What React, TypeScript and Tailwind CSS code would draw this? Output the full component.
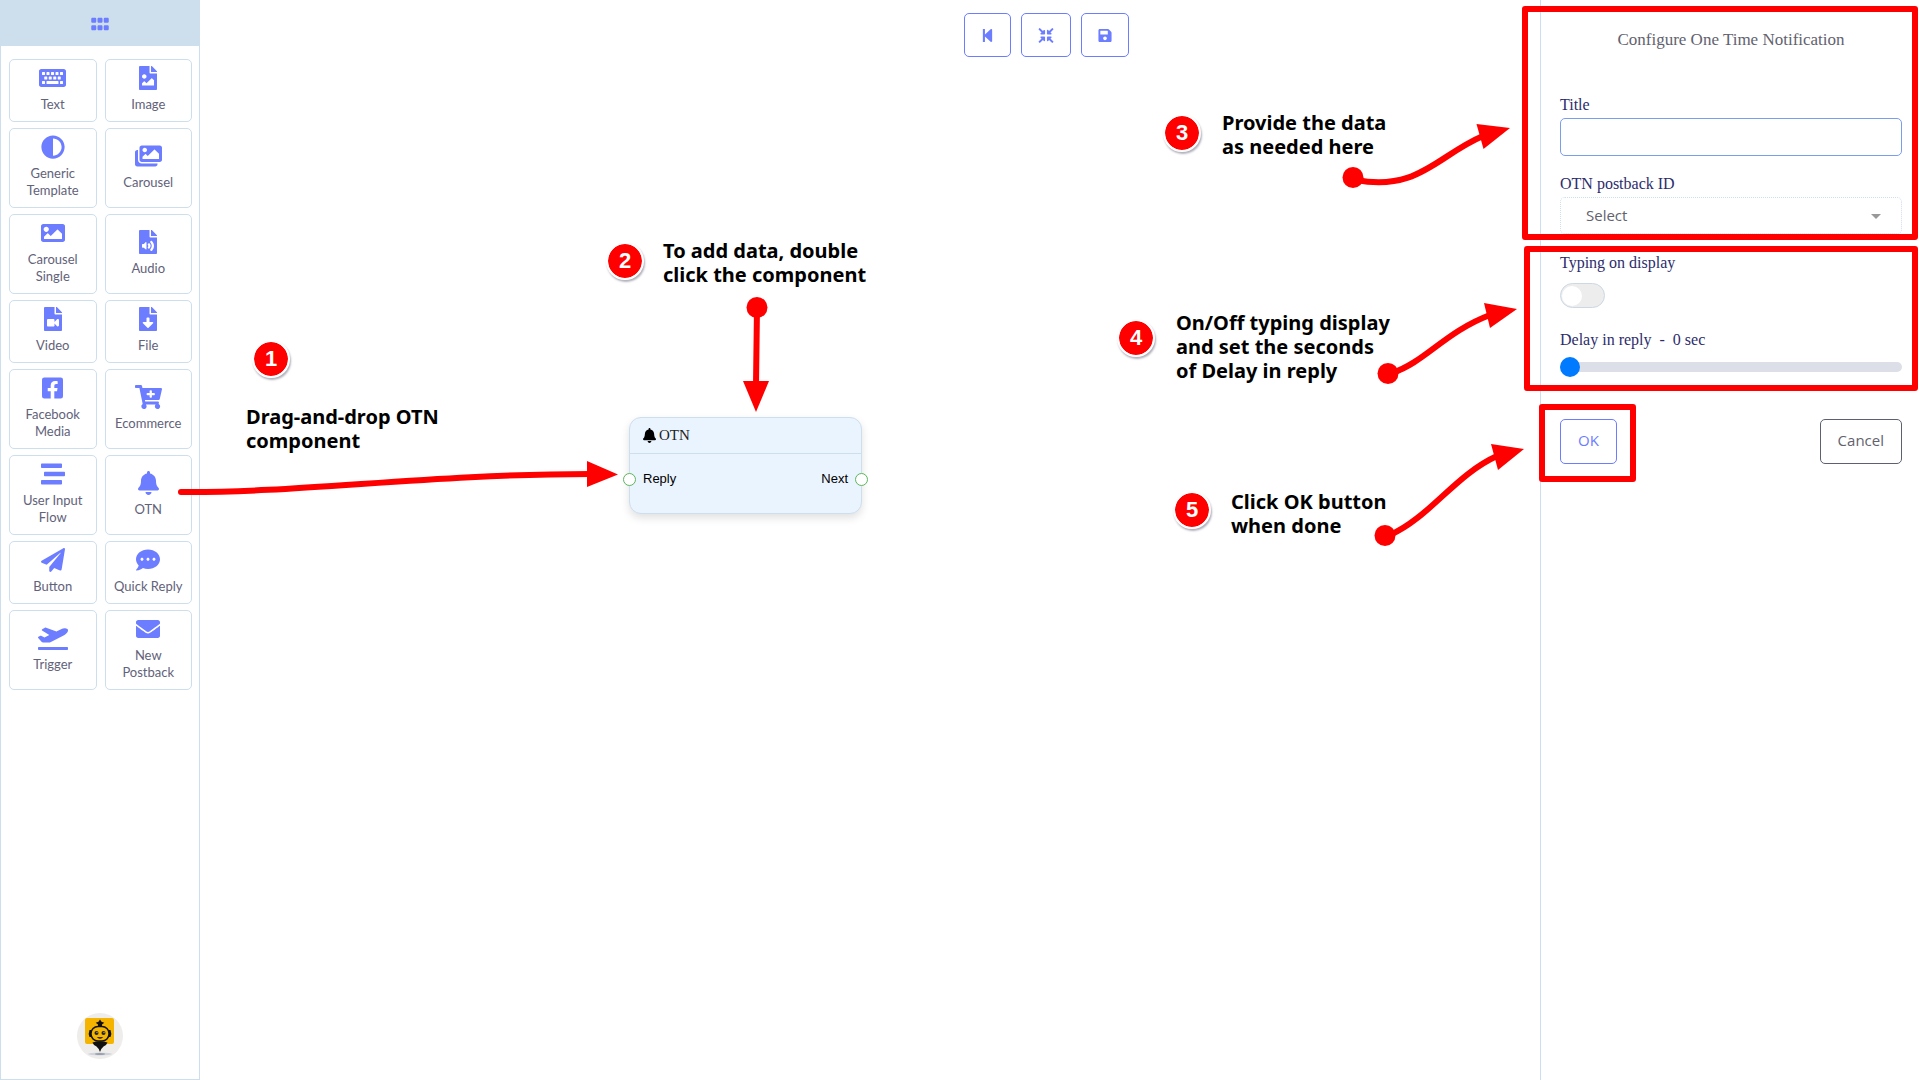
import React, { useState } from 'react';
import type { IconType } from 'react-icons';
import {
    FaAdjust,
    FaBell,
    FaCartPlus,
    FaCommentDots,
    FaCompressArrowsAlt,
    FaEnvelope,
    FaFacebookSquare,
    FaFileAudio,
    FaFileDownload,
    FaFileImage,
    FaFileVideo,
    FaGripHorizontal,
    FaImage,
    FaImages,
    FaKeyboard,
    FaPaperPlane,
    FaPlaneDeparture,
    FaSave,
    FaStepBackward,
    FaStream,
} from 'react-icons/fa';

const components: { label: string, icon: IconType, width: string }[] = [
    { label: 'Text', icon: FaKeyboard, width: 'w-[27px]' },
    { label: 'Image', icon: FaFileImage, width: 'w-[18px]' },
    { label: 'Generic Template', icon: FaAdjust, width: 'w-6' },
    { label: 'Carousel', icon: FaImages, width: 'w-[27px]' },
    { label: 'Carousel Single', icon: FaImage, width: 'w-6' },
    { label: 'Audio', icon: FaFileAudio, width: 'w-[18px]' },
    { label: 'Video', icon: FaFileVideo, width: 'w-[18px]' },
    { label: 'File', icon: FaFileDownload, width: 'w-[18px]' },
    { label: 'Facebook Media', icon: FaFacebookSquare, width: 'w-[21px]' },
    { label: 'Ecommerce', icon: FaCartPlus, width: 'w-[27px]' },
    { label: 'User Input Flow', icon: FaStream, width: 'w-6' },
    { label: 'OTN', icon: FaBell, width: 'w-[21px]' },
    { label: 'Button', icon: FaPaperPlane, width: 'w-6' },
    { label: 'Quick Reply', icon: FaCommentDots, width: 'w-6' },
    { label: 'Trigger', icon: FaPlaneDeparture, width: 'w-[30px]' },
    { label: 'New Postback', icon: FaEnvelope, width: 'w-6' },
];

const tools: { label: string, icon: IconType, width: string }[] = [
    { label: 'Back', icon: FaStepBackward, width: 'w-[13px]' },
    { label: 'Fit to screen', icon: FaCompressArrowsAlt, width: 'w-4' },
    { label: 'Save', icon: FaSave, width: 'w-[14px]' },
];

// Badge and caption positions on the canvas
const steps = [
    { badge: 'left-[252px] top-[340px]', caption: 'left-[246px] top-[405px]', lines: ['Drag-and-drop OTN', 'component'] },
    { badge: 'left-[606px] top-[242px]', caption: 'left-[663px] top-[239px]', lines: ['To add data, double', 'click the component'] },
    { badge: 'left-[1163px] top-[114px]', caption: 'left-[1222px] top-[111px]', lines: ['Provide the data', 'as needed here'] },
    { badge: 'left-[1117px] top-[319px]', caption: 'left-[1176px] top-[311px]', lines: ['On/Off typing display', 'and set the seconds', 'of Delay in reply'] },
    { badge: 'left-[1173px] top-[491px]', caption: 'left-[1231px] top-[490px]', lines: ['Click OK button', 'when done'] },
];

const labelClass = 'block font-["Liberation_Serif",serif] text-[16px] leading-5 text-[#2c2c6c]';

function Robot() {
    return (
        <svg viewBox="0 0 46 46" className="size-[46px]" aria-hidden="true">
            <circle cx="23" cy="23" r="23" fill="#efedeb" />
            <rect x="8" y="5" width="29" height="26" rx="2" fill="#f4b400" />
            <ellipse cx="23" cy="41" rx="12" ry="1.5" fill="#cfd3dc" />
            <ellipse cx="23" cy="41" rx="5" ry="1" fill="#9aa0ac" />
            <path d="M23 6.5l1.5 2.3 2.8 1-2.3 1.6v2h-4v-2l-2.3-1.6 2.8-1z" fill="#111" />
            <path d="M14 17h-1.500q-1.500 3.500 0 7H14zM32 17h1.500q1.500 3.500 0 7H32z" fill="#111" />
            <rect x="14" y="13.500" width="18" height="14.500" rx="7" fill="#f4b400" stroke="#111" strokeWidth="1.500" />
            <circle cx="19.500" cy="20" r="2" fill="#222" />
            <circle cx="26.500" cy="20" r="2" fill="#222" />
            <circle cx="20" cy="19.500" r="0.700" fill="#aaa" />
            <circle cx="27" cy="19.500" r="0.700" fill="#aaa" />
            <path d="M20.500 24.500q2.500 2 5 0z" fill="#7a2a10" stroke="#111" strokeWidth="0.600" />
            <path d="M15.500 29.500q7.500-2.500 15 0-1 3-4 4-2.500 2-3.500 5.500-1-3.500-3.500-5.500-3-1-4-4z" fill="#111" />
        </svg>
    );
}

function Arrows() {
    return (
        <svg width="1920" height="1080" viewBox="0 0 1920 1080" className="pointer-events-none absolute left-0 top-0 z-20" aria-hidden="true">
            <g fill="none" stroke="#f00" strokeWidth="6" strokeLinecap="round">
                <path d="M181 492C300 493 430 474 590 474" />
                <path d="M757 307L756 385" />
                <path d="M1356 180C1418 192 1438 155 1483 136" />
                <path d="M1392 373C1425 362 1445 332 1490 315" />
                <path d="M1390 535C1430 517 1455 475 1497 456" />
            </g>
            <g fill="#f00">
                <path d="M587 461v26l31-12.500z" />
                <path d="M743 381h26l-13 31z" />
                <path d="M1476.500 124l7 25 26.500-21z" />
                <path d="M1484 303l6 25 27-19z" />
                <path d="M1491 444l7 26 26-21z" />
                <circle cx="757" cy="307.500" r="10.500" />
                <circle cx="1353" cy="177.500" r="10.500" />
                <circle cx="1388" cy="373.500" r="10.500" />
                <circle cx="1385" cy="535.500" r="10.500" />
            </g>
        </svg>
    );
}

export default function App() {
    const [title, setTitle] = useState('');
    const [typing, setTyping] = useState(false);
    const [delay, setDelay] = useState(0);

    return (
        <div className="relative flex min-h-screen overflow-hidden bg-white">
            {/* Component palette */}
            <aside className="flex w-[200px] shrink-0 flex-col border border-t-0 border-[#cddeed]">
                <div className="flex h-[46px] items-center justify-center bg-[#cddeed] pt-0.5">
                    <FaGripHorizontal className="h-5 w-[18px] text-[#6c7dff]" />
                </div>
                <div className="mt-[13px] grid grid-cols-2 gap-x-2 gap-y-1.5 pr-[7px] pl-2">
                    {components.map(({ label, icon: Icon, width }) => (
                        <button
                            key={label}
                            type="button"
                            className="flex flex-col items-center justify-center gap-1.5 rounded-[5px] border border-[#cddeed] px-1 pt-1.5 pb-2 font-['Lato',sans-serif] text-[13px] leading-[17px] text-[#62627a]"
                        >
                            <Icon className={`h-6 ${width} text-[#6c7dff]`} />
                            <span className={label.length > 11 ? 'max-w-[66px]' : ''}>{label}</span>
                        </button>
                    ))}
                </div>
                <div className="mt-auto flex justify-center pb-5">
                    <Robot />
                </div>
            </aside>

            {/* Canvas */}
            <main className="min-w-0 flex-1">
                <div className="mt-[13px] flex justify-end gap-2.5 pr-[411px]">
                    {tools.map(({ label, icon: Icon, width }) => (
                        <button
                            key={label}
                            type="button"
                            aria-label={label}
                            className="flex h-11 items-center rounded-[5px] border border-[#6c7dff] px-4 text-[#6c7dff]"
                        >
                            <Icon className={`h-[15px] ${width}`} />
                        </button>
                    ))}
                </div>

                <section className="absolute left-[629px] top-[417px] h-[97px] w-[233px] rounded-xl border border-[#cddeed] bg-[#eaf4ff] shadow-[0_4px_8px_rgba(0,0,0,0.12)]">
                    <h2 className="flex h-9 items-center gap-[3px] border-b border-[#cddeed] pl-[13px] font-['Liberation_Serif',serif] text-[15px] text-[#222]">
                        <FaBell className="h-[15px] w-[13px] text-black" />
                        OTN
                    </h2>
                    <div className="flex justify-between px-[13px] pt-4 font-['Liberation_Sans',sans-serif] text-[13px] leading-[18px] text-black">
                        <span>Reply</span>
                        <span>Next</span>
                    </div>
                    <span className="absolute -left-[7px] top-[55px] size-[13px] rounded-full border border-[#5cb55c] bg-white" />
                    <span className="absolute -right-[7px] top-[55px] size-[13px] rounded-full border border-[#5cb55c] bg-white" />
                </section>

                {steps.map((step, i) => (
                    <React.Fragment key={i}>
                        <span className={`absolute flex size-[38px] items-center justify-center rounded-full border-2 border-white bg-[#f00] bg-clip-padding font-['Liberation_Sans',sans-serif] text-[22px] leading-none font-bold text-white shadow-[1px_2px_2px_rgba(60,60,90,0.4)] ${step.badge}`}>
                            {i + 1}
                        </span>
                        <p className={`absolute font-['Noto_Sans',sans-serif] text-[20px] leading-6 font-bold whitespace-nowrap text-black ${step.caption}`}>
                            {step.lines.map((line) => <span key={line} className="block">{line}</span>)}
                        </p>
                    </React.Fragment>
                ))}
            </main>

            {/* Settings panel */}
            <form className="relative w-[380px] shrink-0 border-l border-[#cddeed] pr-[18px] pl-[19px]" onSubmit={(e) => e.preventDefault()}>
                <h1 className="mt-7 text-center font-['Liberation_Serif',serif] text-[17px] leading-6 text-[#62626e]">Configure One Time Notification</h1>

                <label htmlFor="title" className={`${labelClass} mt-[43px]`}>Title</label>
                <input
                    id="title"
                    value={title}
                    onChange={(e) => setTitle(e.target.value)}
                    className="mt-[3px] block h-[38px] w-full rounded-[5px] border border-[#7c9cec] px-3 outline-none"
                />

                <label htmlFor="postback" className={`${labelClass} mt-[18px]`}>OTN postback ID</label>
                <div className="relative mt-[3px]">
                    <select id="postback" className="block h-[37px] w-full appearance-none rounded-[5px] border border-dotted border-[#cddeed] bg-white px-[25px] font-['Open_Sans',sans-serif] text-[15px] text-[#62626e]">
                        <option>Select</option>
                    </select>
                    <span className="pointer-events-none absolute top-[17px] right-[21px] border-x-5 border-t-5 border-x-transparent border-t-[#999]" />
                </div>

                <label htmlFor="typing" className={`${labelClass} mt-[19px]`}>Typing on display</label>
                <input
                    id="typing"
                    type="checkbox"
                    checked={typing}
                    onChange={(e) => setTyping(e.target.checked)}
                    className="mt-[10px] block h-[25px] w-[45px] appearance-none rounded-full border border-[#cdd8e4] bg-[#ededed] p-px before:mt-px before:block before:size-5 before:rounded-full before:bg-white checked:bg-[#6c7dff] checked:before:ml-5"
                />

                <label htmlFor="delay" className={`${labelClass} mt-[22px]`}>
                    Delay in reply &nbsp;- &nbsp;{delay} sec
                </label>
                <input
                    id="delay"
                    type="range"
                    min={0}
                    max={60}
                    value={delay}
                    onChange={(e) => setDelay(Number(e.target.value))}
                    className="mt-[7px] block h-5 w-full appearance-none bg-transparent [&::-webkit-slider-runnable-track]:h-2.5 [&::-webkit-slider-runnable-track]:rounded-full [&::-webkit-slider-runnable-track]:bg-[#dddfe8] [&::-webkit-slider-thumb]:-mt-[5px] [&::-webkit-slider-thumb]:size-5 [&::-webkit-slider-thumb]:appearance-none [&::-webkit-slider-thumb]:rounded-full [&::-webkit-slider-thumb]:bg-[#007bff]"
                />

                <div className="mt-[42px] flex justify-between font-['Open_Sans',sans-serif] text-[15px]">
                    <button type="submit" className="h-[45px] rounded-[5px] border border-[#6c7dff] px-[17px] pb-0.5 text-[#6c7dff]">OK</button>
                    <button type="button" className="h-[45px] rounded-[5px] border border-[#5c6070] px-[17px] pb-0.5 text-[#62626e]">Cancel</button>
                </div>

                {/* Highlight frames */}
                <div className="pointer-events-none absolute top-[6px] -left-[19px] h-[234px] w-[396px] rounded-[3px] border-6 border-[#f00]" />
                <div className="pointer-events-none absolute top-[246px] -left-[17px] h-[145px] w-[394px] rounded-[3px] border-6 border-[#f00]" />
                <div className="pointer-events-none absolute top-[404px] -left-[2px] h-[78px] w-[97px] rounded-[3px] border-6 border-[#f00]" />
            </form>

            <Arrows />
        </div>
    );
}
